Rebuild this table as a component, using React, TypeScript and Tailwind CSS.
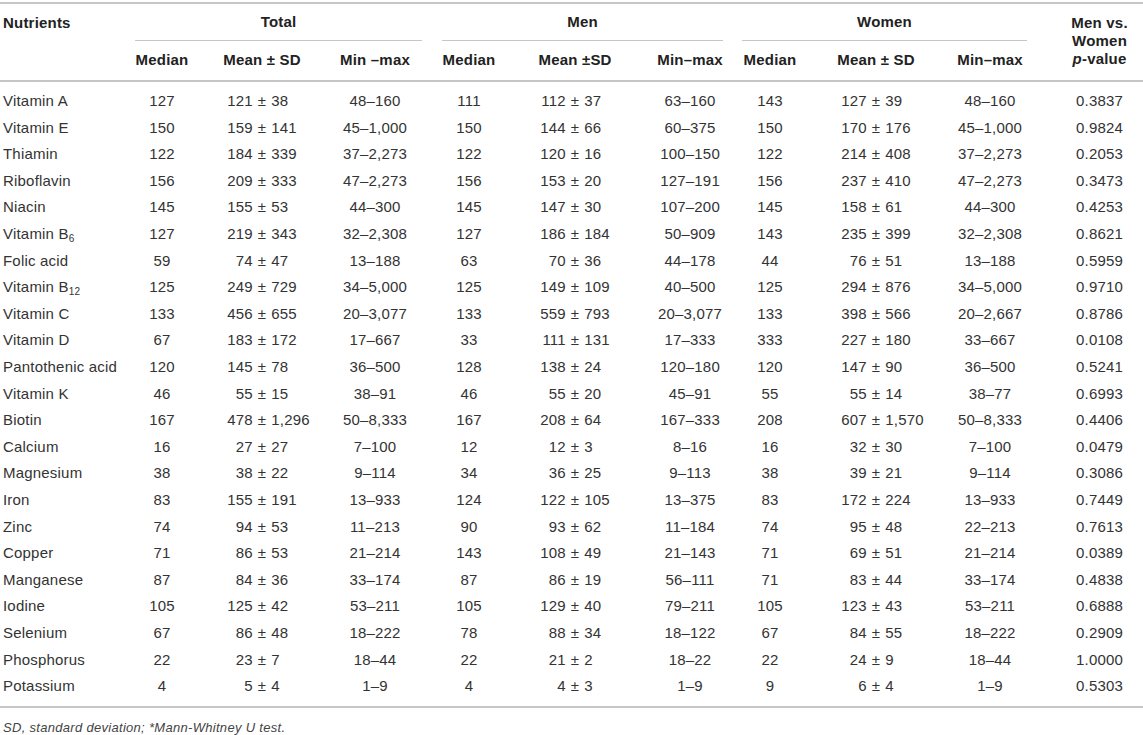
import type { ReactNode } from "react";

type Row = [ReactNode, ...string[]];

const rows: Row[] = [
  ["Vitamin A", "127", "121 ± 38", "48–160", "111", "112 ± 37", "63–160", "143", "127 ± 39", "48–160", "0.3837"],
  ["Vitamin E", "150", "159 ± 141", "45–1,000", "150", "144 ± 66", "60–375", "150", "170 ± 176", "45–1,000", "0.9824"],
  ["Thiamin", "122", "184 ± 339", "37–2,273", "122", "120 ± 16", "100–150", "122", "214 ± 408", "37–2,273", "0.2053"],
  ["Riboflavin", "156", "209 ± 333", "47–2,273", "156", "153 ± 20", "127–191", "156", "237 ± 410", "47–2,273", "0.3473"],
  ["Niacin", "145", "155 ± 53", "44–300", "145", "147 ± 30", "107–200", "145", "158 ± 61", "44–300", "0.4253"],
  [<>Vitamin B<sub className="text-[10px]">6</sub></>, "127", "219 ± 343", "32–2,308", "127", "186 ± 184", "50–909", "143", "235 ± 399", "32–2,308", "0.8621"],
  ["Folic acid", "59", "74 ± 47", "13–188", "63", "70 ± 36", "44–178", "44", "76 ± 51", "13–188", "0.5959"],
  [<>Vitamin B<sub className="text-[10px]">12</sub></>, "125", "249 ± 729", "34–5,000", "125", "149 ± 109", "40–500", "125", "294 ± 876", "34–5,000", "0.9710"],
  ["Vitamin C", "133", "456 ± 655", "20–3,077", "133", "559 ± 793", "20–3,077", "133", "398 ± 566", "20–2,667", "0.8786"],
  ["Vitamin D", "67", "183 ± 172", "17–667", "33", "111 ± 131", "17–333", "333", "227 ± 180", "33–667", "0.0108"],
  ["Pantothenic acid", "120", "145 ± 78", "36–500", "128", "138 ± 24", "120–180", "120", "147 ± 90", "36–500", "0.5241"],
  ["Vitamin K", "46", "55 ± 15", "38–91", "46", "55 ± 20", "45–91", "55", "55 ± 14", "38–77", "0.6993"],
  ["Biotin", "167", "478 ± 1,296", "50–8,333", "167", "208 ± 64", "167–333", "208", "607 ± 1,570", "50–8,333", "0.4406"],
  ["Calcium", "16", "27 ± 27", "7–100", "12", "12 ± 3", "8–16", "16", "32 ± 30", "7–100", "0.0479"],
  ["Magnesium", "38", "38 ± 22", "9–114", "34", "36 ± 25", "9–113", "38", "39 ± 21", "9–114", "0.3086"],
  ["Iron", "83", "155 ± 191", "13–933", "124", "122 ± 105", "13–375", "83", "172 ± 224", "13–933", "0.7449"],
  ["Zinc", "74", "94 ± 53", "11–213", "90", "93 ± 62", "11–184", "74", "95 ± 48", "22–213", "0.7613"],
  ["Copper", "71", "86 ± 53", "21–214", "143", "108 ± 49", "21–143", "71", "69 ± 51", "21–214", "0.0389"],
  ["Manganese", "87", "84 ± 36", "33–174", "87", "86 ± 19", "56–111", "71", "83 ± 44", "33–174", "0.4838"],
  ["Iodine", "105", "125 ± 42", "53–211", "105", "129 ± 40", "79–211", "105", "123 ± 43", "53–211", "0.6888"],
  ["Selenium", "67", "86 ± 48", "18–222", "78", "88 ± 34", "18–122", "67", "84 ± 55", "18–222", "0.2909"],
  ["Phosphorus", "22", "23 ± 7", "18–44", "22", "21 ± 2", "18–22", "22", "24 ± 9", "18–44", "1.0000"],
  ["Potassium", "4", "5 ± 4", "1–9", "4", "4 ± 3", "1–9", "9", "6 ± 4", "1–9", "0.5303"],
];

const widths = ["w-[120px]", "w-[84px]", "w-[116px]", "w-[110px]", "w-[78px]", "w-[134px]", "w-[96px]", "w-[64px]", "w-[148px]", "w-[80px]", "w-[113px]"];

// mean ± SD, lined up on the ± sign
function MeanSd({ v }: { v: string }) {
  const [a, b] = v.split(" ± ");
  return (
    <div className="grid grid-cols-[1fr_auto_1fr] whitespace-nowrap">
      <span className="text-right pr-[5px]">{a}</span>
      <span>±</span>
      <span className="text-left pl-[5px]">{b}</span>
    </div>
  );
}

function Cell({ v, i }: { v: string; i: number }) {
  if (i === 2 || i === 5 || i === 8) return <MeanSd v={v} />;
  return <div className={`flex justify-center whitespace-nowrap ${i === 10 ? "pl-[26px]" : ""}`}>{v}</div>;
}

function Group({ label, cls }: { label: string; cls: string }) {
  return (
    <th colSpan={3} className="p-0 h-[37px] align-bottom font-bold">
      <div className={`h-[37px] flex items-center justify-center border-b border-[#c6c6c6] ${cls}`}>{label}</div>
    </th>
  );
}

export default function App() {
  return (
    <div className="w-[1143px] h-[735px] bg-white pt-[2px] text-[#333] font-['Liberation_Sans',Arial,sans-serif] text-[15px] tracking-[0.2px]">
      <table className="w-full table-fixed border-collapse border-t-2 border-[#c6c6c6]">
        <colgroup>
          {widths.map((w, i) => <col key={i} className={w} />)}
        </colgroup>
        <thead className="border-b-2 border-[#c6c6c6] text-[#222]">
          <tr>
            <th rowSpan={2} className="p-0 pl-[3px] pt-[10px] align-top text-left font-bold leading-[17px]">Nutrients</th>
            <Group label="Total" cls="ml-[15px] mr-[8px]" />
            <Group label="Men" cls="ml-[12px] mr-[15px]" />
            <Group label="Women" cls="ml-[4px] mr-[3px]" />
            <th rowSpan={2} className="p-0 pl-[26px] pt-[10px] align-top text-center font-bold leading-[18px]">
              Men vs.<br />Women<br /><i>p</i>-value
            </th>
          </tr>
          <tr className="h-[40px] font-bold">
            {["Median", "Mean ± SD", "Min –max", "Median", "Mean ±SD", "Min–max", "Median", "Mean ± SD", "Min–max"].map((h, i) => (
              <th key={i} className="p-0 font-bold">
                <div className="flex justify-center whitespace-nowrap">{h}</div>
              </th>
            ))}
          </tr>
        </thead>
        <tbody className="border-b-2 border-[#c6c6c6]">
          <tr className="h-[7px]"><td colSpan={11} className="p-0" /></tr>
          {rows.map((r, k) => (
            <tr key={k} className="h-[26.6px]">
              <td className="p-0 pl-[3px] whitespace-nowrap">{r[0]}</td>
              {r.slice(1).map((v, i) => (
                <td key={i} className="p-0">
                  <Cell v={v as string} i={i + 1} />
                </td>
              ))}
            </tr>
          ))}
          <tr className="h-[7px]"><td colSpan={11} className="p-0" /></tr>
        </tbody>
      </table>
      <p className="mt-[12px] pl-[3px] italic text-[13px] leading-[16px] tracking-[0.3px] text-[#444]">
        SD, standard deviation; *Mann-Whitney U test.
      </p>
    </div>
  );
}
